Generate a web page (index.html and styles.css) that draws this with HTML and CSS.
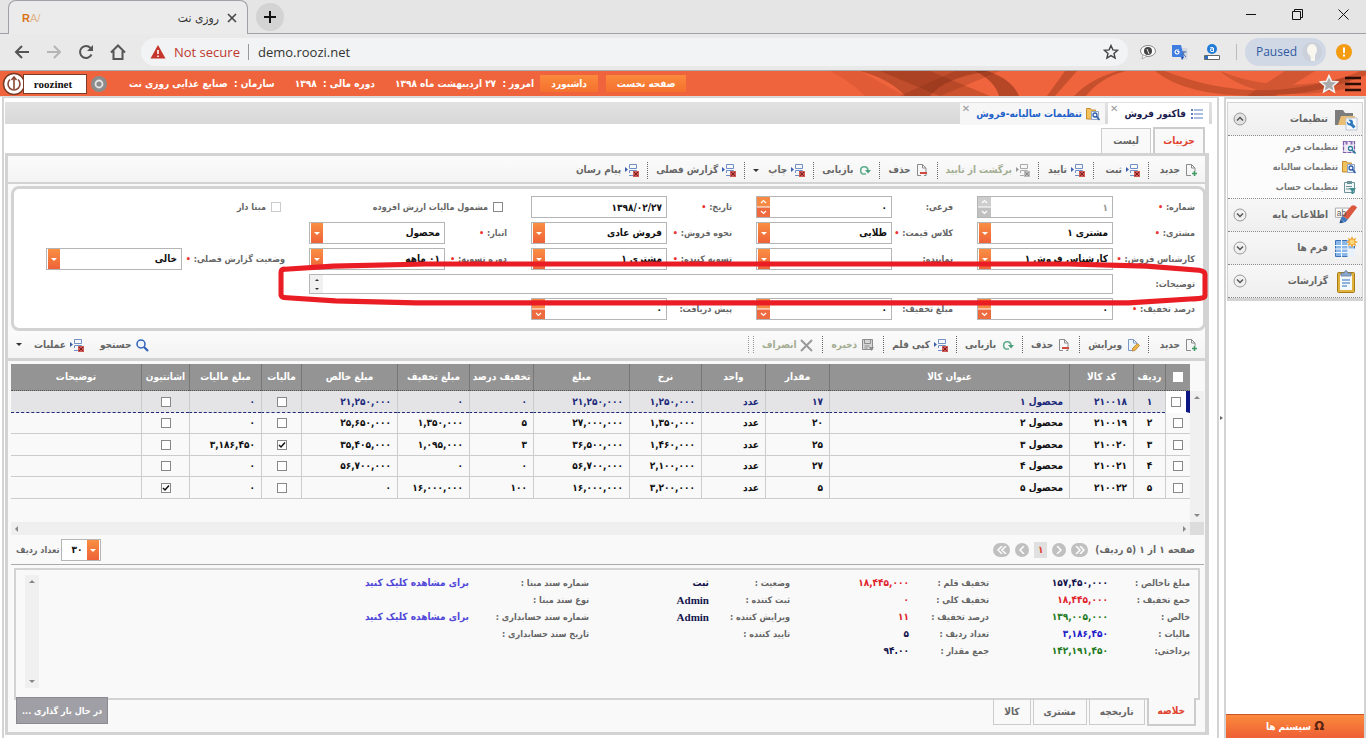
FILE: index.html
```html
<!doctype html>

<html lang="fa">
 <head>
  <meta charset="utf-8">
  <title>روزی نت</title>
  <link rel="stylesheet" href="styles.css">
 </head>

 <body>

  <!-- icon set -->
  <svg class="sprite" aria-hidden="true">
	<symbol id="i-tree" viewBox="0 0 14 14">
	 <path d="M0 4l3 2.500L0 9z" fill="#3a5fae"/>
	 <path d="M4.500 1.500h7v4h-7zM4.500 10V7.500h7V9M4 12.500h4" fill="none" stroke="#6f8fc8"/>
	 <path d="M8 8h6v6H8z" fill="#cf5a55"/><path d="M9 9l4 4M13 9l-4 4" stroke="#7d1c1c"/>
	</symbol>
	<symbol id="i-treegrey" viewBox="0 0 14 14">
	 <path d="M0 4l3 2.500L0 9z" fill="#999"/>
	 <path d="M4.500 1.500h7v4h-7zM4.500 10V7.500h7V9M4 12.500h4" fill="none" stroke="#aaa"/>
	 <path d="M8 8h6v6H8z" fill="#bbb"/><path d="M9 9l4 4M13 9l-4 4" stroke="#888"/>
	</symbol>
	<symbol id="i-new" viewBox="0 0 14 14">
	 <path d="M7 12.500H2.500v-11h5l3.500 3.500v3M7.500 1.500V5H11" fill="none" stroke="#8b8b8b"/>
	 <path d="M8 10.500h5M10.500 8v5" stroke="#3f9a63" stroke-width="1.600"/>
	</symbol>
	<symbol id="i-del" viewBox="0 0 14 14">
	 <path d="M6 12.500H2.500v-11h5l3.500 3.500v7.500H9M7.500 1.500V5H11" fill="none" stroke="#8b8b8b"/>
	 <path d="M5 10h7" stroke="#d24a3e" stroke-width="2"/>
	</symbol>
	<symbol id="i-edit" viewBox="0 0 14 14">
	 <path d="M6 12.500H2.500v-11h5l3.500 3.500v1M7.500 1.500V5H11" fill="#eef4fc" stroke="#7c99c4"/>
	 <path d="M6 13l.8-3L11.500 5.500l2 2L9 12.500z" fill="#f0b445" stroke="#a8702a" stroke-width=".7"/>
	</symbol>
	<symbol id="i-refresh" viewBox="0 0 14 14">
	 <path d="M7 11.200A3.700 3.700 0 1 1 11 7" fill="none" stroke="#5fae8c" stroke-width="1.600"/>
	 <path d="M8 7h6l-3 3.500z" fill="#4a9e7b"/><path d="M7 11h2" stroke="#5fae8c" stroke-width="1.600"/>
	</symbol>
	<symbol id="i-save" viewBox="0 0 14 14">
	 <path d="M1.500 1.500h10v10h-10z" fill="#d5d5d5" stroke="#8d8d8d"/>
	 <path d="M3.500 2v3.500h6V2M3.500 8h5M3.500 10h3" fill="none" stroke="#8d8d8d"/>
	 <path d="M8 9h5l-2.500 4z" fill="#8d8d8d"/>
	</symbol>
	<symbol id="i-cancel" viewBox="0 0 14 14"><path d="M1 2l11 11M12 2L1 13" stroke="#999" stroke-width="2"/></symbol>
	<symbol id="i-search" viewBox="0 0 14 14">
	 <circle cx="6" cy="6" r="4" fill="#eef5ff" stroke="#2d62b8" stroke-width="1.500"/><path d="M9 9l4 4" stroke="#2d62b8" stroke-width="2.200"/>
	</symbol>
	<symbol id="i-list" viewBox="0 0 14 14">
	 <path d="M1 3h2M1 7h2M1 11h2" stroke="#2b55a8" stroke-width="1.500"/><path d="M4 3h9M4 7h9M4 11h9" stroke="#8fa9d6" stroke-width="1.300"/>
	</symbol>
	<symbol id="i-foldersearch" viewBox="0 0 14 14">
	 <path d="M.5 1.500h4l1 1.500h4v9h-9z" fill="#f2c25c" stroke="#c58d2d"/>
	 <path d="M5.500 4.500h7v8h-7z" fill="#eef4fc" stroke="#8ea5c8"/>
	 <circle cx="9" cy="8" r="2" fill="none" stroke="#2f5da8" stroke-width="1.300"/><path d="M10.500 9.500l3 3.500" stroke="#2f5da8" stroke-width="1.600"/>
	</symbol>
	<symbol id="i-disk" viewBox="0 0 14 14">
	 <path d="M1.500 1.500h11v11h-11z" fill="#efe9f5" stroke="#7b5aa6" stroke-width="1.200" stroke-dasharray="4 1"/><path d="M3.500 1v3.500h2V1M8.500 1v3.500h2V1" fill="#8e6db7"/>
	 <circle cx="8.500" cy="8.500" r="2" fill="#fff" stroke="#2f7f9a" stroke-width="1.300"/><path d="M10 10l3.500 3.500" stroke="#2f7f9a" stroke-width="1.600"/>
	</symbol>
	<symbol id="i-account" viewBox="0 0 14 14">
	 <path d="M2.500 2.500h10v10h-10z" fill="#f1f7f7" stroke="#6d9297"/><path d="M5 1h5v3H5z" fill="#6d9297"/>
	 <path d="M4 6.500h6M4 9h4" stroke="#6d9297"/><path d="M7 8h7l-2.500 3v3h-2v-3z" fill="#3e8b92"/>
	</symbol>
	<symbol id="i-folderwrench" viewBox="0 0 24 24">
	 <path d="M1 3h8l2 3h8v12H1z" fill="#7c7c7c"/><path d="M4 18L7 9h14v9z" fill="#e9bd73"/>
	 <path d="M12 11h11v12H12z" fill="#f4f7fb" stroke="#bcc5d2"/>
	 <path d="M15 15l5.500 5.500" stroke="#2d78bd" stroke-width="3"/><circle cx="16" cy="15.500" r="3" fill="#2d78bd"/><path d="M13 13l3 3" stroke="#f4f7fb" stroke-width="2"/>
	</symbol>
	<symbol id="i-marker" viewBox="0 0 26 24">
	 <path d="M1.500 4.500h15v10h-15z" fill="#fff" stroke="#a5a5a5"/>
	 <path d="M9 13L19 2q3-1.500 6 2L15 17z" fill="#d9583f"/><path d="M9 13l6 4-3 3-5-3z" fill="#3f78bd"/><path d="M7 17l4 3-5 1z" fill="#25508b"/>
	</symbol>
	<symbol id="i-grid" viewBox="0 0 24 24">
	 <path d="M1.500 4.500h19v16h-19z" fill="#8ab6e8" stroke="#3d73ba"/>
	 <path d="M1 9.500h20M1 13h20M1 16.500h20M7.500 4v17M14 4v17" stroke="#f5faff"/><path d="M14 13h7v8h-7z" fill="#e9f2fc"/>
	 <path d="M18 0l1.300 3 3-1.300L21 4.700 24 6l-3 1.300 1.300 3-3-1.300L18 12l-1.300-3-3 1.300 1.300-3L12 6l3-1.300-1.300-3 3 1.300z" fill="#f0a637"/><circle cx="18" cy="6" r="2.500" fill="#fbd679"/>
	</symbol>
	<symbol id="i-clip" viewBox="0 0 20 24">
	 <rect x="1.500" y="3.500" width="17" height="20" rx="1" fill="#e0b23b" stroke="#a87b18"/><path d="M4 6h12v15H4z" fill="#f3f8ff"/>
	 <path d="M6 11h8M6 14h8M6 17h5" stroke="#6f9ad0" stroke-width="1.500"/><path d="M5 7V4h3q2-5 4 0h3v3z" fill="#8ca8cc" stroke="#56749c" stroke-width=".7"/>
	</symbol>
	<symbol id="i-down" viewBox="0 0 14 14">
	 <circle cx="7" cy="7" r="6" fill="#f0f0f0" stroke="#999"/><path d="M4 5.500l3 3 3-3" fill="none" stroke="#555" stroke-width="1.500"/>
	</symbol>
	<symbol id="i-up" viewBox="0 0 14 14">
	 <circle cx="7" cy="7" r="6" fill="#e2e2e2" stroke="#999"/><path d="M4 8.500l3-3 3 3" fill="none" stroke="#555" stroke-width="1.500"/>
	</symbol>
  </svg>

  <!-- browser chrome -->
  <div class="tabstrip">
	<div class="btab">
	 <span class="fav"><b>R</b>A/</span>
	 <span class="btitle" dir="rtl">روزی نت</span>
	 <button class="plain" aria-label="Close tab"><svg width="10" height="10" viewBox="0 0 10 10"><path d="M1 1l8 8M9 1L1 9" stroke="#444" stroke-width="1.600"/></svg></button>
	</div>
	<button class="plus" aria-label="New tab"><svg width="12" height="12" viewBox="0 0 12 12"><path d="M6 0v12M0 6h12" stroke="#111" stroke-width="2"/></svg></button>
	<div class="winbtns">
	 <button class="plain" aria-label="Minimize"><svg width="11" height="11" viewBox="0 0 11 11"><path d="M0 5.500h10" stroke="#111"/></svg></button>
	 <button class="plain" aria-label="Restore"><svg width="11" height="11" viewBox="0 0 11 11"><path d="M.5 2.500h8v8h-8zM2.500 2V.5h8v8H9" fill="none" stroke="#111"/></svg></button>
	 <button class="plain" aria-label="Close"><svg width="11" height="11" viewBox="0 0 11 11"><path d="M.5.5l10 10M10.500.5l-10 10" stroke="#111"/></svg></button>
	</div>
  </div>

  <div class="navbar">
	<button class="plain" aria-label="Back"><svg width="16" height="16" viewBox="0 0 16 16"><path d="M15 8H2M8 2L2 8l6 6" fill="none" stroke="#555" stroke-width="2"/></svg></button>
	<button class="plain" aria-label="Forward"><svg width="16" height="16" viewBox="0 0 16 16"><path d="M1 8h13M8 2l6 6-6 6" fill="none" stroke="#b5b5b5" stroke-width="2"/></svg></button>
	<button class="plain" aria-label="Reload"><svg width="16" height="16" viewBox="0 0 16 16"><path d="M13.500 10.500A6 6 0 1 1 12.500 4" fill="none" stroke="#555" stroke-width="2"/><path d="M15 1v6H9z" fill="#555"/></svg></button>
	<button class="plain" aria-label="Home"><svg width="16" height="16" viewBox="0 0 16 16"><path d="M1 8.500L8 1.500l7 7M3.500 7v8h9V7" fill="none" stroke="#555" stroke-width="2"/></svg></button>
	<div class="address">
	 <svg width="16" height="16" viewBox="0 0 16 16"><path d="M8 1l7.500 13.500H.5z" fill="#c5352b"/><path d="M8 6v4M8 11.500v1.500" stroke="#fff" stroke-width="1.600"/></svg>
	 <span class="insecure">Not secure</span>
	 <input class="url" aria-label="Address" value="demo.roozi.net">
	 <svg width="16" height="16" viewBox="0 0 16 16"><path d="M8 1.500l1.900 4.400 4.700.4-3.600 3.100 1.100 4.700L8 11.600l-4.100 2.500L5 9.400 1.400 6.300l4.700-.4z" fill="none" stroke="#444" stroke-width="1.400"/></svg>
	</div>
	<div class="exts">
	 <svg width="16" height="16" viewBox="0 0 16 16"><ellipse cx="8" cy="7" rx="7.500" ry="5.500" fill="#fff" stroke="#888"/><path d="M3 11l-1 4 5-3z" fill="#fff" stroke="#888" stroke-width=".6"/><circle cx="8" cy="7" r="4" fill="#444"/><path d="M7 5l2 5" stroke="#eee"/></svg>
	 <svg width="16" height="16" viewBox="0 0 16 16"><path d="M7 4h8.500v11.500H9z" fill="#d4d9e0"/><path d="M0 1h9l3 12H1q-1 0-1-1z" fill="#3f7de0"/><path d="M7 6H5a2 2 0 1 0 2 1.500H5" fill="none" stroke="#fff" stroke-width="1.200"/><path d="M9.500 8h5M12 7v1q-.5 3-2 4.500M10.500 9l3.500 4" fill="none" stroke="#4c6fae"/><path d="M9 13h3l-2 3z" fill="#1b4fb0"/></svg>
	 <svg width="16" height="16" viewBox="0 0 16 16"><circle cx="8" cy="5" r="5" fill="#1f7bd6"/><path d="M6 4q2-1.500 3.500 0v3.500H7q-1.500-1.500 0-2.500h2.500" fill="none" stroke="#fff"/><path d="M.5 11.500h15v4H.5z" fill="#fff" stroke="#666"/><path d="M1 12h3v3H1z" fill="#2b6fc2"/></svg>
	</div>
	<span class="vline"></span>
	<button class="paused">Paused <svg width="20" height="20" viewBox="0 0 20 20"><circle cx="10" cy="10" r="10" fill="#cbd0da"/><ellipse cx="10" cy="8" rx="5" ry="6" fill="#f8f6ef"/><path d="M8 12h5v7H9z" fill="#f8f6ef"/></svg></button>
	<button class="plain" aria-label="Update"><svg width="16" height="16" viewBox="0 0 16 16"><circle cx="8" cy="8" r="8" fill="#f39c12"/><path d="M8 3.500v5.500M8 10.500v2" stroke="#fff" stroke-width="2"/></svg></button>
  </div>

  <!-- application header -->
  <div class="topbar">
	<svg class="swirl" viewBox="0 0 536 25" preserveAspectRatio="none">
	 <g fill="#7b2a12">
	  <path d="M0 0h30l45 25H35Q20 10 0 0z" opacity=".12"/>
	  <path d="M30 0h130q-45 6-60 25H75Q60 8 30 0z" opacity=".4"/>
	  <path d="M50 0h50l60 25h-50z" opacity=".3"/>
	  <path d="M145 0h12q25 8 32 25h-20Q165 10 145 0z" opacity=".5"/>
	  <path d="M70 25L125 0h45l-60 25z" opacity=".25"/>
	  <path d="M235 0h12l-22 25h-8zM288 0h8q-25 6-40 25h-12Q260 8 288 0z" opacity=".35"/>
	  <path d="M325 0h10q60 24 120 18 50-6 75-18h6v4q-50 21-110 21-70 0-101-25z" opacity=".3"/>
	  <path d="M390 0q60 25 130 5v12q-90 18-130-17zM455 0h30l-40 25h-28z" opacity=".25"/>
	 </g>
	</svg>
	<div class="brand">
	 <svg width="24" height="24" viewBox="0 0 24 24"><circle cx="12" cy="12" r="10.500" fill="#fff" stroke="#7d3a26" stroke-width="1.500"/><path d="M8 7.500a6 6 0 1 0 8 0M12 5v12M9.500 8L12 5l2.500 3" fill="none" stroke="#8a4634" stroke-width="1.600"/></svg>
	 <span class="brandname">roozinet</span>
	</div>
	<svg class="ring" width="16" height="16" viewBox="0 0 16 16"><circle cx="8" cy="8" r="8" fill="#8c8c8c"/><circle cx="8" cy="8" r="3.500" fill="none" stroke="#e6e6e6" stroke-width="1.800"/></svg>
	<span class="info org" dir="rtl">سازمان :&nbsp;&nbsp;صنایع غذایی روزی نت</span>
	<span class="info" dir="rtl">دوره مالی :&nbsp;&nbsp;۱۳۹۸</span>
	<span class="info" dir="rtl">امروز :&nbsp;&nbsp;۲۷ اردیبهشت ماه ۱۳۹۸</span>
	<button class="topbtn dash">داشبورد</button>
	<button class="topbtn home">صفحه نخست</button>
	<div class="topend">
	 <svg width="20" height="20" viewBox="0 0 20 20"><path d="M10 1.500l2.500 5.700 6.200.6-4.700 4.100 1.400 6.100-5.400-3.200L4.600 18 6 11.900 1.300 7.800l6.200-.6z" fill="#aaa" stroke="#f2f2f2" stroke-width="1.500"/></svg>
	 <button class="plain" aria-label="Menu"><svg width="18" height="16" viewBox="0 0 18 16"><path d="M1 2h16M1 8h16M1 14h16" stroke="#2b0d05" stroke-width="2.500"/></svg></button>
	</div>
  </div>

  <div class="app" dir="rtl">

	<!-- side menu -->
	<div class="side">
	 <div class="menu">
	  <button class="group"><svg class="gi"><use href="#i-folderwrench"/></svg><span>تنظیمات</span><svg class="chev"><use href="#i-up"/></svg></button>
	  <div class="items">
	   <a href="#"><svg class="i"><use href="#i-disk"/></svg>تنظیمات فرم</a>
	   <a href="#"><svg class="i"><use href="#i-foldersearch"/></svg>تنظیمات سالیانه</a>
	   <a href="#"><svg class="i"><use href="#i-account"/></svg>تنظیمات حساب</a>
	  </div>
	  <button class="group"><svg class="gi" viewBox="0 0 26 24"><use href="#i-marker"/><text x="3" y="13" class="abl">ab</text></svg><span>اطلاعات پایه</span><svg class="chev"><use href="#i-down"/></svg></button>
	  <button class="group"><svg class="gi"><use href="#i-grid"/></svg><span>فرم ها</span><svg class="chev"><use href="#i-down"/></svg></button>
	  <button class="group"><svg class="gi"><use href="#i-clip"/></svg><span>گزارشات</span><svg class="chev"><use href="#i-down"/></svg></button>
	 </div>
	 <button class="systems"><span class="omega">Ω</span> سیستم ها</button>
	</div>
	<div class="splitter"><span></span></div>

	<div class="main">
	 <div class="doctabs">
	  <div class="doctab active"><svg class="i"><use href="#i-list"/></svg><a href="#">فاکتور فروش</a><button class="x" aria-label="بستن">✕</button></div>
	  <div class="doctab"><svg class="i"><use href="#i-foldersearch"/></svg><a href="#">تنظیمات سالیانه-فروش</a><button class="x" aria-label="بستن">✕</button></div>
	 </div>
	 <div class="subtabs">
	  <button class="subtab active">جزییات</button>
	  <button class="subtab">لیست</button>
	 </div>

	 <div class="frame">
	  <div class="toolbar">
	   <button><svg class="i"><use href="#i-new"/></svg>جدید</button>
	   <button><svg class="i"><use href="#i-tree"/></svg>ثبت</button>
	   <button><svg class="i"><use href="#i-tree"/></svg>تایید</button>
	   <button disabled><svg class="i"><use href="#i-treegrey"/></svg>برگشت از تایید</button>
	   <button><svg class="i"><use href="#i-del"/></svg>حذف</button>
	   <button><svg class="i"><use href="#i-refresh"/></svg>بازیابی</button>
	   <button><svg class="i"><use href="#i-tree"/></svg>چاپ<span class="caret"></span></button>
	   <button><svg class="i"><use href="#i-tree"/></svg>گزارش فصلی</button>
	   <button class="nosep"><svg class="i"><use href="#i-tree"/></svg>پیام رسان</button>
	  </div>

	  <div class="form">
	   <label for="f1" class="rowstart">شماره: <i>•</i></label>
	   <div class="num off"><input id="f1" value="۱" disabled><span class="spin"></span></div>
	   <label for="f2">فرعی:</label>
	   <div class="num"><input id="f2" value="۰"><span class="spin"></span></div>
	   <label for="f3">تاریخ: <i>•</i></label>
	   <input id="f3" value="۱۳۹۸/۰۲/۲۷">
	   <span class="check"><input type="checkbox" id="f4"><label for="f4">مشمول مالیات ارزش افزوده</label></span>
	   <span class="check dim"><input type="checkbox" id="f5"><label for="f5">مبنا دار</label></span>

	   <label for="f6" class="rowstart">مشتری: <i>•</i></label>
	   <select id="f6"><option>مشتری ۱</option></select>
	   <label for="f7">کلاس قیمت: <i>•</i></label>
	   <select id="f7"><option>طلایی</option></select>
	   <label for="f8">نحوه فروش: <i>•</i></label>
	   <select id="f8"><option>فروش عادی</option></select>
	   <label for="f9">انبار: <i>•</i></label>
	   <select id="f9"><option>محصول</option></select>

	   <label for="f10" class="rowstart">کارشناس فروش: <i>•</i></label>
	   <select id="f10"><option>کارشناس فروش ۱</option></select>
	   <label for="f11">نماینده:</label>
	   <select id="f11"><option></option></select>
	   <label for="f12">تسویه کننده: <i>•</i></label>
	   <select id="f12"><option>مشتری ۱</option></select>
	   <label for="f13">دوره تسویه: <i>•</i></label>
	   <select id="f13"><option>۰۱ ماهه</option></select>
	   <label for="f14">وضعیت گزارش فصلی: <i>•</i></label>
	   <select id="f14"><option>خالی</option></select>

	   <label for="f15" class="rowstart">توضیحات:</label>
	   <div class="note"><textarea id="f15" rows="1"></textarea><span class="mini"></span></div>

	   <label for="f16" class="rowstart">درصد تخفیف: <i>•</i></label>
	   <div class="num"><input id="f16" value="۰"><span class="spin"></span></div>
	   <label for="f17">مبلغ تخفیف:</label>
	   <div class="num"><input id="f17" value="۰"><span class="spin"></span></div>
	   <label for="f18">پیش دریافت:</label>
	   <div class="num"><input id="f18" value="۰"><span class="spin"></span></div>

	   <svg class="mark" viewBox="0 0 930 45" preserveAspectRatio="none"><path d="M6 34V11Q6 8 10 8L58 5L150 3H790L868 5L920 9Q926 10 926 13V34Q926 37 915 37L850 41H140L60 39L12 36Q6 36 6 33" fill="none" stroke="#ea1c24" stroke-width="5"/></svg>
	  </div>

	  <div class="toolbar second">
	   <button><svg class="i"><use href="#i-new"/></svg>جدید</button>
	   <button><svg class="i"><use href="#i-edit"/></svg>ویرایش</button>
	   <button><svg class="i"><use href="#i-del"/></svg>حذف</button>
	   <button><svg class="i"><use href="#i-refresh"/></svg>بازیابی</button>
	   <button><svg class="i"><use href="#i-tree"/></svg>کپی قلم</button>
	   <button disabled><svg class="i"><use href="#i-save"/></svg>ذخیره</button>
	   <button disabled><svg class="i"><use href="#i-cancel"/></svg>انصراف</button>
	   <span class="endsep"></span>
	   <span class="fill"></span>
	   <button class="nosep"><svg class="i"><use href="#i-search"/></svg>جستجو</button>
	   <button class="nosep"><svg class="i"><use href="#i-tree"/></svg>عملیات<span class="caret far"></span></button>
	  </div>

	  <div class="gridbox">
	   <div class="gridmain">
		<table class="grid">
		 <colgroup><col class="w25"><col class="w32"><col class="w64"><col><col class="w64"><col class="w64"><col class="w72"><col class="w96"><col class="w64"><col class="w72"><col class="w96"><col class="w40"><col class="w72"><col class="w48"><col class="w130"></colgroup>
		 <thead>
		  <tr><th><input type="checkbox" class="all" aria-label="انتخاب همه"></th><th>ردیف</th><th>کد کالا</th><th>عنوان کالا</th><th>مقدار</th><th>واحد</th><th>نرخ</th><th>مبلغ</th><th>تخفیف درصد</th><th>مبلغ تخفیف</th><th>مبلغ خالص</th><th>مالیات</th><th>مبلغ مالیات</th><th>اشانتیون</th><th>توضیحات</th></tr>
		 </thead>
		 <tbody>
		  <tr class="sel"><td class="c"><input type="checkbox" aria-label="ردیف ۱"></td><td class="c">۱</td><td>۲۱۰۰۱۸</td><td>محصول ۱</td><td>۱۷</td><td>عدد</td><td>۱,۲۵۰,۰۰۰</td><td>۲۱,۲۵۰,۰۰۰</td><td>۰</td><td>۰</td><td>۲۱,۲۵۰,۰۰۰</td><td class="c"><input type="checkbox" aria-label="مالیات"></td><td>۰</td><td class="c"><input type="checkbox" aria-label="اشانتیون"></td><td></td></tr>
		  <tr><td class="c"><input type="checkbox" aria-label="ردیف ۲"></td><td class="c">۲</td><td>۲۱۰۰۱۹</td><td>محصول ۲</td><td>۲۰</td><td>عدد</td><td>۱,۳۵۰,۰۰۰</td><td>۲۷,۰۰۰,۰۰۰</td><td>۵</td><td>۱,۳۵۰,۰۰۰</td><td>۲۵,۶۵۰,۰۰۰</td><td class="c"><input type="checkbox" aria-label="مالیات"></td><td>۰</td><td class="c"><input type="checkbox" aria-label="اشانتیون"></td><td></td></tr>
		  <tr><td class="c"><input type="checkbox" aria-label="ردیف ۳"></td><td class="c">۳</td><td>۲۱۰۰۲۰</td><td>محصول ۳</td><td>۲۵</td><td>عدد</td><td>۱,۴۶۰,۰۰۰</td><td>۳۶,۵۰۰,۰۰۰</td><td>۳</td><td>۱,۰۹۵,۰۰۰</td><td>۳۵,۴۰۵,۰۰۰</td><td class="c"><input type="checkbox" aria-label="مالیات" checked></td><td>۳,۱۸۶,۴۵۰</td><td class="c"><input type="checkbox" aria-label="اشانتیون"></td><td></td></tr>
		  <tr><td class="c"><input type="checkbox" aria-label="ردیف ۴"></td><td class="c">۴</td><td>۲۱۰۰۲۱</td><td>محصول ۴</td><td>۲۷</td><td>عدد</td><td>۲,۱۰۰,۰۰۰</td><td>۵۶,۷۰۰,۰۰۰</td><td>۰</td><td>۰</td><td>۵۶,۷۰۰,۰۰۰</td><td class="c"><input type="checkbox" aria-label="مالیات"></td><td>۰</td><td class="c"><input type="checkbox" aria-label="اشانتیون"></td><td></td></tr>
		  <tr><td class="c"><input type="checkbox" aria-label="ردیف ۵"></td><td class="c">۵</td><td>۲۱۰۰۲۲</td><td>محصول ۵</td><td>۵</td><td>عدد</td><td>۳,۲۰۰,۰۰۰</td><td>۱۶,۰۰۰,۰۰۰</td><td>۱۰۰</td><td>۱۶,۰۰۰,۰۰۰</td><td>۰</td><td class="c"><input type="checkbox" aria-label="مالیات"></td><td>۰</td><td class="c"><input type="checkbox" aria-label="اشانتیون" checked></td><td></td></tr>
		 </tbody>
		</table>
	   </div>
	   <div class="vscroll"><b class="t-up"></b><b class="t-down"></b></div>
	   <div class="hscroll"><b class="t-right"></b><b class="t-left"></b></div>
	   <div class="corner"></div>
	  </div>

	  <div class="pager">
	   <span class="pagetext">صفحه ۱ از ۱ (۵ ردیف)</span>
	   <button class="pg wide" aria-label="اولین"><svg width="10" height="8" viewBox="0 0 10 8"><path d="M1 0l4 4-4 4M5 0l4 4-4 4" fill="none" stroke="#fff" stroke-width="1.500"/></svg></button>
	   <button class="pg" aria-label="قبلی"><svg width="6" height="8" viewBox="0 0 6 8"><path d="M1 0l4 4-4 4" fill="none" stroke="#fff" stroke-width="1.500"/></svg></button>
	   <span class="cur">۱</span>
	   <button class="pg" aria-label="بعدی"><svg width="6" height="8" viewBox="0 0 6 8"><path d="M5 0L1 4l4 4" fill="none" stroke="#fff" stroke-width="1.500"/></svg></button>
	   <button class="pg wide" aria-label="آخرین"><svg width="10" height="8" viewBox="0 0 10 8"><path d="M5 0L1 4l4 4M9 0L5 4l4 4" fill="none" stroke="#fff" stroke-width="1.500"/></svg></button>
	   <span class="fill"></span>
	   <select id="rows"><option>۳۰</option></select>
	   <label for="rows">تعداد ردیف</label>
	  </div>

	  <div class="summary">
	   <dl class="sum">
		<dt>مبلغ ناخالص :</dt><dd>۱۵۷,۴۵۰,۰۰۰</dd><dt>تخفیف قلم :</dt><dd class="red">۱۸,۴۴۵,۰۰۰</dd><dt>وضعیت :</dt><dd>ثبت</dd><dt>شماره سند مبنا :</dt><dd><a href="#">برای مشاهده کلیک کنید</a></dd>
		<dt>جمع تخفیف :</dt><dd class="red">۱۸,۴۴۵,۰۰۰</dd><dt>تخفیف کلی :</dt><dd class="red">۰</dd><dt>ثبت کننده :</dt><dd class="lat">Admin</dd><dt>نوع سند مبنا :</dt><dd></dd>
		<dt>خالص :</dt><dd class="green">۱۳۹,۰۰۵,۰۰۰</dd><dt>درصد تخفیف :</dt><dd class="red">۱۱</dd><dt>ویرایش کننده :</dt><dd class="lat">Admin</dd><dt>شماره سند حسابداری :</dt><dd><a href="#">برای مشاهده کلیک کنید</a></dd>
		<dt>مالیات :</dt><dd class="blue">۳,۱۸۶,۴۵۰</dd><dt>تعداد ردیف :</dt><dd>۵</dd><dt>تایید کننده :</dt><dd></dd><dt>تاریخ سند حسابداری :</dt><dd></dd>
		<dt>پرداختی:</dt><dd class="green">۱۴۲,۱۹۱,۴۵۰</dd><dt>جمع مقدار :</dt><dd>۹۴.۰۰</dd>
	   </dl>
	   <div class="vscroll"><b class="t-up"></b><b class="t-down"></b></div>
	   <div class="loading">در حال بار گذاری ...</div>
	  </div>
	  <div class="bottabs">
	   <button class="bottab active">خلاصه</button>
	   <button class="bottab">تاریخچه</button>
	   <button class="bottab">مشتری</button>
	   <button class="bottab">کالا</button>
	  </div>
	 </div>
	</div>
  </div>

 </body>
</html>
```
FILE: styles.css
```css
* { box-sizing: border-box; }
body { margin: 0; min-height: 100vh; display: flex; flex-direction: column; background: #fff; color: #666; font: bold 10px/16px "DejaVu Sans Condensed", "DejaVu Sans", sans-serif; }
button, input, select, textarea { font: inherit; color: inherit; margin: 0; }
button { border: 0; background: none; padding: 0; white-space: nowrap; }
a { color: inherit; text-decoration: none; }
svg { flex: none; }
.sprite { display: none; }
.plain { display: flex; }
.fill { flex: 1; }
.i { width: 14px; height: 14px; }

/* browser */
.tabstrip { height: 34px; display: flex; background: #e5e5e5; border-bottom: 1px solid #a0a0a6; padding-left: 8px; }
.btab { width: 240px; height: 34px; display: flex; align-items: center; gap: 8px; padding: 0 10px 0 13px; background: #ebebeb; border: 1px solid #a0a0a6; border-bottom: 0; border-radius: 8px 8px 0 0; }
.fav { color: #e0b48a; font: 11px/16px "Liberation Sans", sans-serif; }
.fav b { color: #d9731a; }
.btitle { flex: 1; font: 12px/18px "DejaVu Sans Condensed", "DejaVu Sans", sans-serif; color: #333; }
.plus { width: 28px; height: 28px; margin: 3px 0 0 8px; border-radius: 14px; background: #d3d3d3; display: flex; align-items: center; justify-content: center; }
.winbtns { margin-left: auto; display: flex; gap: 35px; padding: 9px 17px 0 0; }
.navbar { height: 37px; display: flex; align-items: center; gap: 16px; padding: 0 14px; background: #e9e9ea; border-bottom: 1px solid #aaa; }
.address { flex: 1; height: 28px; margin-left: -1px; margin-right: -4px; padding: 0 9px 0 9px; display: flex; align-items: center; gap: 8px; background: #f1f3f4; border-radius: 14px; font: 13px/20px "Open Sans", sans-serif; }
.insecure { color: #c0392f; }
.url { flex: 1; min-width: 0; height: 16px; border: 0; border-left: 1px solid #999; padding: 0 0 0 9px; background: none; color: #333; }
.exts { display: flex; gap: 16px; }
.vline { width: 1px; height: 16px; background: #bbb; }
.paused { height: 28px; margin: 0 -6px 0 -8px; padding: 0 4px 0 11px; display: flex; align-items: center; gap: 5px; border-radius: 14px; background: #d0d8e6; color: #2f5aa0; font: 12px/20px "Open Sans", sans-serif; }

/* orange bar */
.topbar { position: relative; height: 26px; display: flex; align-items: center; background: #ef643c; border-bottom: 1px solid #ddd; color: #fff; padding: 0 4px 0 2px; }
.swirl { position: absolute; right: 0; top: 0; width: 536px; height: 25px; }
.brand { display: flex; align-items: center; }
.brandname { height: 20px; width: 64px; margin-left: -3px; padding-right: 4px; background: #fff; border: 1px solid #7d3a26; color: #111; text-align: center; font: bold 11px/18px "Liberation Serif", serif; }
.ring { margin-left: 4px; }
.info { margin-left: 20px; white-space: nowrap; }
.org { margin-left: 22px; }
.topbtn { height: 17px; margin-left: 6px; background: linear-gradient(#fb8a3c, #f4702f); text-align: center; }
.dash { width: 58px; }
.home { width: 80px; margin-left: 8px; }
.topend { position: relative; margin-left: auto; display: flex; align-items: center; gap: 5px; }

/* page */
.app { flex: 1; display: flex; }
.side { width: 142px; display: flex; flex-direction: column; justify-content: space-between; border: solid #d3d3d3; border-width: 2px 2px 0; }
.menu { margin: 3px 1px 0 1px; border: 1px solid #d3d3d3; border-bottom-width: 3px; background: #fcfcfc; }
.group { width: 100%; height: 33px; padding: 0 4px 0 5px; display: flex; align-items: center; gap: 6px; background: linear-gradient(#f7f7f7, #efefef); border-bottom: 1px dotted #888; }
.gi { width: 24px; height: 24px; }
.abl { font: 9px "Liberation Sans", sans-serif; fill: #555; direction: ltr; }
.chev { width: 14px; height: 14px; margin-right: auto; }
.items { padding: 1px 0; border-bottom: 1px dotted #888; color: #777; font-size: 9px; }
.items a { height: 20px; padding-right: 6px; display: flex; align-items: center; gap: 4px; }
.systems { height: 24px; background: linear-gradient(#fb8a3c, #ee5f35); border-top: 1px solid #c8552b; color: #fff; }
.omega { color: #5a2412; font-size: 13px; }
.splitter { width: 7px; display: flex; align-items: center; justify-content: center; border-left: 2px solid #d3d3d3; }
.splitter span { border: 2px solid transparent; border-left: 3px solid #666; border-right: 0; }
.main { flex: 1; min-width: 0; display: flex; flex-direction: column; margin-left: 2px; padding: 4px 5px 3px 1px; border: solid #d3d3d3; border-width: 1px 0 0 2px; }

.doctabs { height: 22px; display: flex; gap: 3px; padding-right: 3px; background: linear-gradient(#e2e2e2, #d8d8d8); }
.doctab { height: 22px; margin-top: 1px; padding: 0 5px 0 2px; display: flex; align-items: center; gap: 4px; background: #f6f6f6; color: #2462c9; }
.doctab.active { background: #fff; color: #1b1b4d; }
.x { align-self: flex-start; margin-right: 2px; color: #999; font: 10px/12px "DejaVu Sans", sans-serif; }
.subtabs { height: 29px; display: flex; align-items: flex-end; gap: 2px; padding-right: 7px; }
.subtab { height: 25px; min-width: 50px; border: 1px solid #ccc; border-bottom: 0; background: #f9f9f9; }
.subtab.active { height: 26px; min-width: 52px; padding: 0 8px; border-width: 2px 2px 0 2px; color: #e0432f; }

.frame { flex: 1; display: flex; flex-direction: column; padding: 2px 1px 1px 3px; border: 3px solid #d3d3d3; border-right-width: 4px; background: #f9f9f9; margin-right: 3px; }
.toolbar { height: 26px; display: flex; align-items: center; margin: 0 -1px 0 -3px; padding: 0 7px; border-bottom: 2px solid #d3d3d3; background: linear-gradient(#fbfbfb, #f3f3f3); }
.toolbar button { height: 17px; min-width: 55px; padding: 0 8px; display: flex; align-items: center; gap: 4px; border-left: 1px dotted #666; }
.toolbar button:first-child { min-width: 50px; padding-right: 0; }
.toolbar button:disabled { color: #a3ad92; }
.toolbar .nosep { border-left: 0; }
.endsep { width: 6px; height: 17px; margin-right: -1px; border: dotted #999; border-width: 0 1px; }
.caret { margin: 0 5px 0 0; border: 3px solid transparent; border-top-color: #333; border-bottom: 0; }
.caret.far { margin-right: 8px; }

.form { position: relative; margin: 2px -2px 0 0; padding: 7px 8px 8px 32px; background: #fff; border: 3px solid #d3d3d3; border-radius: 8px; display: grid; grid-template-columns: 82px 1fr 85px 1fr 89px 1fr 86px 1fr 127px 1fr; gap: 4px 0; align-items: center; }
.form label, .sum dt, .pager label, .loading { font-size: 9px; white-space: nowrap; }
.form > label { padding-right: 24px; }
.form > .rowstart { grid-column: 1; padding-right: 0; }
.form i { color: #e33; font-style: normal; }
.form input, .form select, .form textarea, .pager select { width: 100%; height: 22px; border: 1px solid #b5b5b5; border-radius: 0; background-color: #fff; color: #111; padding: 0 4px 0 22px; appearance: none; outline: 0; min-width: 0; }
select { background: url("data:image/svg+xml,%3Csvg xmlns='http://www.w3.org/2000/svg' width='13' height='20'%3E%3ClinearGradient id='g' x2='0' y2='1'%3E%3Cstop stop-color='%23f98f42'/%3E%3Cstop offset='1' stop-color='%23ee6238'/%3E%3C/linearGradient%3E%3Cpath d='M0 0h12v20H0z' fill='url(%23g)'/%3E%3Cpath d='M3 9h6l-3 3z' fill='%23fff'/%3E%3C/svg%3E") 1px center no-repeat; }
.num { position: relative; display: flex; }
.spin { position: absolute; left: 1px; top: 1px; width: 13px; height: 20px; background: url("data:image/svg+xml,%3Csvg xmlns='http://www.w3.org/2000/svg' width='13' height='20'%3E%3Cpath d='M0 0h13v9.500H0z' fill='%23f68a45'/%3E%3Cpath d='M0 10.500h13v9.500H0z' fill='%23ee6a3f'/%3E%3Cpath d='M4 6l2.500-2.500L9 6M4 14l2.500 2.500L9 14' fill='none' stroke='%23fff' stroke-width='1.200'/%3E%3C/svg%3E"); }
.off .spin { filter: grayscale(1); opacity: .5; }
.form .off input { color: #999; }
.check { grid-column: span 2; display: flex; align-items: center; gap: 5px; padding-right: 28px; }
.form .check input, .grid input { appearance: none; flex: none; width: 10px; height: 10px; padding: 0; margin: 0; border: 1px solid #888; background-color: #fff; vertical-align: middle; }
.form .dim input { border-color: #ccc; }
.note { grid-column: 2 / span 7; position: relative; display: flex; }
.form textarea { height: 20px; resize: none; overflow: hidden; line-height: 18px; }
.mini { position: absolute; left: 1px; top: 1px; width: 13px; height: 18px; background: #f1f1f1 url("data:image/svg+xml,%3Csvg xmlns='http://www.w3.org/2000/svg' width='13' height='18'%3E%3Cpath d='M5 6l2-2 2 2zM5 13l2 2 2-2z' fill='%23333'/%3E%3C/svg%3E"); }
.mark { position: absolute; right: -6px; top: 72px; width: 934px; height: 46px; pointer-events: none; }
.second { height: 30px; padding-left: 0; border-bottom-width: 3px; }

/* grid */
.gridbox { display: grid; grid-template-columns: 14px 1fr; grid-template-rows: 158px 13px; margin-top: 3px; }
.gridmain { grid-column: 2; grid-row: 1; }
.gridbox .vscroll { grid-column: 1; grid-row: 1; margin-top: 27px; }
.hscroll { grid-column: 2; grid-row: 2; background: #efefef; display: flex; justify-content: space-between; align-items: center; padding: 0 4px; }
.corner { grid-column: 1; grid-row: 2; background: #dcdcdc; }
.grid { width: 100%; table-layout: fixed; border-collapse: separate; border-spacing: 0; color: #111; }
.w25 { width: 25px; } .w32 { width: 32px; } .w40 { width: 40px; } .w48 { width: 48px; } .w64 { width: 64px; } .w72 { width: 72px; } .w96 { width: 96px; } .w130 { width: 130px; }
.grid th { height: 27px; padding: 0; background: #949494; color: #fff; border-left: 1px solid #777; border-bottom: 1px dotted #555; white-space: nowrap; }
.grid td { height: 22px; padding: 0 6px; border-left: 1px solid #ccc; border-bottom: 1px solid #ccc; white-space: nowrap; line-height: 16px; }
.grid tr:nth-child(even) td { height: 21px; }
.grid th:last-child, .grid td:last-child { border-left: 0; }
.grid td.c { padding: 0; text-align: center; }
.grid .sel td { background: #e4e4e7; color: #1c2a7a; border-bottom: 1px dashed #1c2a7a; }
.grid .sel td:first-child { background: #fff; border-right: 4px solid #0b1583; border-bottom-color: #fff; }
.grid .all { border-color: #fff; }
input[type=checkbox]:checked { background: #fff url("data:image/svg+xml,%3Csvg xmlns='http://www.w3.org/2000/svg' width='8' height='8'%3E%3Cpath d='M1 4l2 2 4-4.500' fill='none' stroke='%23111' stroke-width='1.500'/%3E%3C/svg%3E") center no-repeat; }
.vscroll { display: flex; flex-direction: column; justify-content: space-between; align-items: center; padding: 5px 0; background: #f0f0f0; }
.vscroll b, .hscroll b { border: 3px solid transparent; }
b.t-up { border-top: 0; border-bottom-color: #888; }
b.t-down { border-bottom: 0; border-top-color: #888; }
b.t-right { border-right: 0; border-left-color: #888; }
b.t-left { border-left: 0; border-right-color: #888; }

.pager { height: 30px; display: flex; align-items: center; gap: 5px; padding: 0 9px 0 5px; border-bottom: 1px solid #aaa; }
.pagetext { margin-left: 2px; }
.pg { width: 14px; height: 14px; border-radius: 7px; background: #c0c0c0; display: flex; align-items: center; justify-content: center; }
.pg.wide { width: 17px; }
.cur { width: 13px; height: 16px; background: #e0e0e0; color: #e0432f; text-align: center; }
.pager select { width: 40px; margin-left: -4px; padding: 0 17px 0 0; background-position: 25px center; }

.summary { position: relative; flex: 1; min-height: 130px; margin: 3px 4px 0 3px; padding: 5px 8px 10px 9px; border: 2px solid #d3d3d3; display: flex; }
.sum { flex: 1; margin: 0; display: grid; grid-template-columns: 82px 119px 80px 119px 81px 120px 120px 1fr; grid-auto-rows: 17px; color: #14144d; }
.sum dt { color: #666; }
.sum dd { margin: 0; }
.sum .red { color: #e0242e; } .sum .green { color: #1d7a22; } .sum .blue { color: #2020c8; }
.sum a { color: #5248d8; }
.sum .lat { font: bold 11px/16px "Liberation Serif", serif; }
.summary .vscroll { width: 14px; }
.loading { position: absolute; left: 0; bottom: -26px; padding: 5px 5px; height: 27px; background: #a09fa6; border: 1px solid #8a8a90; color: #fff; }
.bottabs { display: flex; gap: 2px; height: 31px; padding-right: 8px; align-items: flex-start; }
.bottab { height: 25px; padding: 0 10px; border: 1px solid #ccc; border-top: 0; background: #f9f9f9; }
.bottab.active { position: relative; margin-top: -2px; height: 28px; padding: 0 9px; border: 2px solid #ccc; border-top: 0; color: #e0432f; }
```
